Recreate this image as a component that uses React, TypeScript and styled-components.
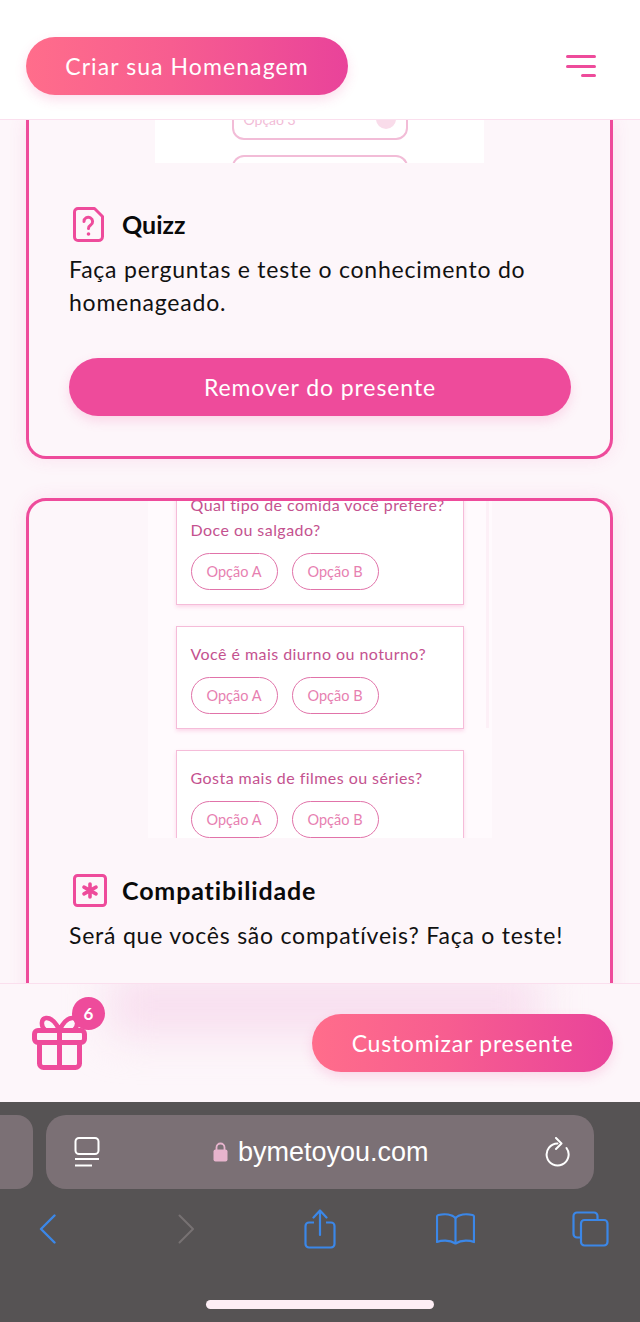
import styled, { createGlobalStyle } from "styled-components";

const PINK = "#ee4b9b";
const PAGE_BG = "#fdf6fa";
const BODY_FONT = `"Lato", "Noto Sans", sans-serif`;

const questions = [
  { id: 1, lines: ["Qual tipo de comida você prefere?", "Doce ou salgado?"] },
  { id: 2, lines: ["Você é mais diurno ou noturno?"] },
  { id: 3, lines: ["Gosta mais de filmes ou séries?"] },
];

function App() {
  return (
    <Page>
      <GlobalStyle />
      <Header>
        <GradientButton $width={322} $tracking={1.08}>
          Criar sua Homenagem
        </GradientButton>
        <MenuIcon>
          <MenuBar />
          <MenuBar />
          <MenuBar $short />
        </MenuIcon>
      </Header>

      <Content>
        <Card $cutTop>
          <QuizPreview>
            <OptionPill>
              Opção 3
              <OptionDot />
            </OptionPill>
            <OptionPillStub />
          </QuizPreview>
          <CardBody $top={43.5} $bottom={40}>
            <TitleRow>
              <IconSlot>
                <svg width="31" height="35" viewBox="0 0 31 35" fill="none">
                  <path
                    d="M5 1.500h16.500l8 8v20a4 4 0 0 1-4 4H5A3.500 3.500 0 0 1 1.500 30V5A3.500 3.500 0 0 1 5 1.500z"
                    stroke={PINK}
                    strokeWidth="3"
                    strokeLinejoin="round"
                  />
                  <path
                    d="M11 14.500a4.300 4.300 0 1 1 6.700 3.600c-1.500 1-2.200 1.700-2.200 3.400"
                    stroke={PINK}
                    strokeWidth="3"
                    strokeLinecap="round"
                  />
                  <circle cx="15.500" cy="27" r="1.800" fill={PINK} />
                </svg>
              </IconSlot>
              <CardTitle>Quizz</CardTitle>
            </TitleRow>
            <CardText>Faça perguntas e teste o conhecimento do homenageado.</CardText>
            <RemoveButton>Remover do presente</RemoveButton>
          </CardBody>
        </Card>

        <Card>
          <CompatPreview>
            <PreviewScroll />
            {questions.map((q) => (
              <QuestionCard key={q.id}>
                <QuestionText>
                  {q.lines.map((line) => (
                    <div key={line}>{line}</div>
                  ))}
                </QuestionText>
                <AnswerRow>
                  <AnswerPill>Opção A</AnswerPill>
                  <AnswerPill>Opção B</AnswerPill>
                </AnswerRow>
              </QuestionCard>
            ))}
          </CompatPreview>
          <CardBody $top={34.5} $bottom={120}>
            <TitleRow>
              <IconSlot>
                <svg width="34" height="33" viewBox="0 0 34 33" fill="none">
                  <rect x="1.500" y="1.500" width="31" height="30" rx="3" stroke={PINK} strokeWidth="3" />
                  <path
                    d="M17 10v13M11 13.200l12 6.600M23 13.200l-12 6.600"
                    stroke={PINK}
                    strokeWidth="3.600"
                    strokeLinecap="round"
                  />
                </svg>
              </IconSlot>
              <CardTitle $tracking={0.85}>Compatibilidade</CardTitle>
            </TitleRow>
            <CardText>Será que vocês são compatíveis? Faça o teste!</CardText>
          </CardBody>
        </Card>
      </Content>

      <Footer>
        <GiftWrap>
          <svg width="55" height="55" viewBox="0 0 55 55" fill="none">
            <rect x="2.500" y="15.500" width="50" height="12" rx="3.500" stroke={PINK} strokeWidth="5" />
            <path
              d="M7.500 27v21.500a4 4 0 0 0 4 4h32a4 4 0 0 0 4-4V27M27.500 16v36"
              stroke={PINK}
              strokeWidth="5"
            />
            <path
              d="M27.500 15C24 8 19 2.500 14 3C9 3.500 8.500 11 13 15M27.500 15C31 8 36 2.500 41 3C46 3.500 46.500 11 42 15"
              stroke={PINK}
              strokeWidth="4.500"
              strokeLinecap="round"
            />
          </svg>
          <GiftBadge>6</GiftBadge>
        </GiftWrap>
        <GradientButton $width={301} $tracking={0.76}>
          Customizar presente
        </GradientButton>
      </Footer>

      <Browser>
        <AddressRow>
          <TabStub />
          <AddressBar>
            <svg width="26" height="30" viewBox="0 0 26 30" fill="none" stroke="#fff">
              <rect x="1.500" y="1" width="23" height="16" rx="3.500" strokeWidth="2" />
              <path d="M1 22h24" strokeWidth="2" />
              <path d="M1 28.500h17" strokeWidth="2" />
            </svg>
            <UrlGroup>
              <svg width="15" height="20" viewBox="0 0 15 20" fill="none">
                <path d="M3.500 8V5.500a4 4 0 0 1 8 0V8" stroke="#e7b4cd" strokeWidth="1.800" />
                <rect x="0.500" y="7.500" width="14" height="12" rx="2" fill="#e7b4cd" />
              </svg>
              <UrlText>bymetoyou.com</UrlText>
            </UrlGroup>
            <svg width="25" height="30" viewBox="0 0 25 30" fill="none" stroke="#fff" strokeWidth="2">
              <path d="M12.500 6.500A11 11 0 1 0 21.500 11" strokeLinecap="round" />
              <path d="M11 1l5.500 5.500L11 12" strokeLinecap="round" strokeLinejoin="round" />
            </svg>
          </AddressBar>
        </AddressRow>

        <Toolbar>
          <svg width="17" height="30" viewBox="0 0 17 30" fill="none" stroke="#3b87e8" strokeWidth="2.400">
            <path d="M15.500 1.500L2 15l13.500 13.500" strokeLinecap="round" strokeLinejoin="round" />
          </svg>
          <svg width="17" height="30" viewBox="0 0 17 30" fill="none" stroke="#777273" strokeWidth="2">
            <path d="M1.500 1.500L15 15 1.500 28.500" strokeLinecap="round" strokeLinejoin="round" />
          </svg>
          <svg width="32" height="40" viewBox="0 0 32 40" fill="none" stroke="#3b87e8" strokeWidth="2.200">
            <path d="M10 13.500H5a3.500 3.500 0 0 0-3.500 3.500v18A3.500 3.500 0 0 0 5 38.500h22a3.500 3.500 0 0 0 3.500-3.500V17a3.500 3.500 0 0 0-3.500-3.500h-5" />
            <path d="M16 26V2M9.500 8.500L16 1.500l6.500 7" strokeLinecap="round" strokeLinejoin="round" />
          </svg>
          <svg width="39" height="32" viewBox="0 0 39 32" fill="none" stroke="#3b87e8" strokeWidth="2.200">
            <path d="M19.500 5C16 1.500 9 .5 2.500 2 1.500 2.300 1 3 1 4v25c4-1.500 12-2.500 18.500 1.500C26 26.500 34 27.500 38 29V4c0-1-.5-1.700-1.500-2C30 .5 23 1.500 19.500 5z" strokeLinejoin="round" />
            <path d="M19.500 5v25" />
          </svg>
          <svg width="37" height="36" viewBox="0 0 37 36" fill="none" stroke="#3b87e8" strokeWidth="2.200">
            <path d="M8 26.500H5a3.500 3.500 0 0 1-3.500-3.500V5A3.500 3.500 0 0 1 5 1.500h17A3.500 3.500 0 0 1 25.500 5v3" />
            <rect x="9" y="9" width="26.500" height="25.500" rx="3.500" />
          </svg>
        </Toolbar>

        <HomeIndicator />
      </Browser>
    </Page>
  );
}

const GlobalStyle = createGlobalStyle`
  html, body {
    margin: 0;
    padding: 0;
    background: ${PAGE_BG};
  }
  * {
    box-sizing: border-box;
  }
`;

const Page = styled.div`
  width: 640px;
  height: 1322px;
  display: flex;
  flex-direction: column;
  overflow: hidden;
  font-family: ${BODY_FONT};
  background: ${PAGE_BG};
`;

const Header = styled.header`
  height: 120px;
  flex-shrink: 0;
  padding: 37px 44px 24px 26px;
  display: flex;
  align-items: center;
  justify-content: space-between;
  background: #fff;
  border-bottom: 1px solid #fbdfee;
`;

const GradientButton = styled.button<{ $width: number; $tracking: number }>`
  position: relative;
  width: ${(p) => p.$width}px;
  height: 58px;
  flex-shrink: 0;
  border: 0;
  border-radius: 29px;
  background: linear-gradient(90deg, #ff6d8b 0%, #f75d90 45%, #e9439a 100%);
  box-shadow: 0 5px 12px rgba(238, 75, 155, 0.18);
  color: #fff;
  font-family: ${BODY_FONT};
  font-size: 23px;
  letter-spacing: ${(p) => p.$tracking}px;
`;

const MenuIcon = styled.div`
  width: 30px;
  display: flex;
  flex-direction: column;
  align-items: flex-end;
  gap: 6.5px;
`;

const MenuBar = styled.span<{ $short?: boolean }>`
  display: block;
  width: ${(p) => (p.$short ? "15px" : "30px")};
  height: 3px;
  border-radius: 2px;
  background: ${PINK};
`;

const Content = styled.main`
  height: 863px;
  flex-shrink: 0;
  overflow: hidden;
  padding: 0 26px;
  display: flex;
  flex-direction: column;
  gap: 39px;
`;

const Card = styled.section<{ $cutTop?: boolean }>`
  flex-shrink: 0;
  width: 587px;
  border: 3px solid ${PINK};
  border-top-width: ${(p) => (p.$cutTop ? 0 : 3)}px;
  border-radius: ${(p) => (p.$cutTop ? "0 0 20px 20px" : "20px")};
  background: ${PAGE_BG};
  box-shadow: 0 0 18px rgba(238, 75, 155, 0.12);
`;

const QuizPreview = styled.div`
  width: 329px;
  height: 43px;
  margin: 0 auto;
  overflow: hidden;
  background: #fff;
  display: flex;
  flex-direction: column;
  align-items: center;
  gap: 15px;
`;

const OptionPill = styled.div`
  width: 176px;
  height: 36px;
  flex-shrink: 0;
  margin-top: -16px;
  padding: 0 10px 6px;
  display: flex;
  align-items: center;
  justify-content: space-between;
  border: 2px solid #f2bcd7;
  border-radius: 12px;
  color: #f2bcd7;
  font-size: 14px;
`;

const OptionDot = styled.span`
  width: 20px;
  height: 20px;
  border-radius: 50%;
  background: #f9dcea;
`;

const OptionPillStub = styled.div`
  width: 176px;
  height: 12px;
  flex-shrink: 0;
  border: 2px solid #f2bcd7;
  border-radius: 12px 12px 0 0;
`;

const CompatPreview = styled.div`
  position: relative;
  width: 344px;
  height: 337px;
  margin: 0 auto;
  overflow: hidden;
  background: #fffafd;
  display: flex;
  flex-direction: column;
  align-items: center;
  gap: 21px;
`;

const PreviewScroll = styled.span`
  position: absolute;
  top: 0;
  right: 3px;
  width: 3px;
  height: 227px;
  background: #fdf0f7;
`;

const QuestionCard = styled.div`
  width: 288px;
  flex-shrink: 0;
  padding: 14px 14px 14px;
  background: #fff;
  border: 1px solid #f5bcd9;
  box-shadow: 0 2px 4px rgba(238, 75, 155, 0.2);

  &:first-of-type {
    margin-top: -24px;
  }
`;

const QuestionText = styled.div`
  font-size: 16px;
  line-height: 25px;
  letter-spacing: 0.45px;
  color: #c4528f;
`;

const AnswerRow = styled.div`
  margin-top: 11px;
  display: flex;
  gap: 14px;
`;

const AnswerPill = styled.div`
  width: 87px;
  height: 37px;
  display: flex;
  align-items: center;
  justify-content: center;
  border: 1px solid #e173a9;
  border-radius: 19px;
  font-size: 14.5px;
  color: #e77fb1;
`;

const CardBody = styled.div<{ $top: number; $bottom: number }>`
  padding: ${(p) => p.$top}px 39px ${(p) => p.$bottom}px 40px;
`;

const TitleRow = styled.div`
  display: flex;
  align-items: center;
  height: 35px;
`;

const IconSlot = styled.div`
  width: 53px;
  flex-shrink: 0;
  padding-left: 3.5px;
  display: flex;
`;

const CardTitle = styled.h3<{ $tracking?: number }>`
  margin: 0;
  font-size: 25px;
  font-weight: 700;
  letter-spacing: ${(p) => p.$tracking ?? 0}px;
  color: #0a0a0a;
`;

const CardText = styled.p`
  margin: 11px 0 0;
  font-size: 23px;
  line-height: 33px;
  letter-spacing: 0.77px;
  color: #111;
`;

const RemoveButton = styled.button`
  display: block;
  width: 502px;
  height: 58px;
  margin-top: 39.5px;
  border: 0;
  border-radius: 29px;
  background: ${PINK};
  box-shadow: 0 5px 12px rgba(238, 75, 155, 0.18);
  color: #fff;
  font-family: ${BODY_FONT};
  font-size: 23px;
  letter-spacing: 0.92px;
`;

const Footer = styled.footer`
  position: relative;
  height: 119px;
  flex-shrink: 0;
  padding: 30px 27px 0 32px;
  display: flex;
  align-items: flex-start;
  justify-content: space-between;
  overflow: hidden;
  background: ${PAGE_BG};
  border-top: 1px solid #fbdfee;

  &::before {
    content: "";
    position: absolute;
    left: 110px;
    top: -10px;
    width: 430px;
    height: 62px;
    background: #f8dfef;
    filter: blur(20px);
  }
`;

const GiftWrap = styled.div`
  position: relative;
  width: 55px;
  height: 55px;
  margin-top: 1px;
`;

const GiftBadge = styled.span`
  position: absolute;
  left: 40px;
  top: -18px;
  width: 33px;
  height: 33px;
  display: flex;
  align-items: center;
  justify-content: center;
  border-radius: 50%;
  background: ${PINK};
  color: #fff;
  font-size: 17px;
  font-weight: 700;
`;

const Browser = styled.div`
  flex: 1;
  background: #565354;
  display: flex;
  flex-direction: column;
`;

const AddressRow = styled.div`
  margin-top: 13px;
  display: flex;
  gap: 13px;
`;

const TabStub = styled.div`
  width: 33px;
  height: 74px;
  border-radius: 0 16px 16px 0;
  background: #7b7075;
`;

const AddressBar = styled.div`
  width: 548px;
  height: 74px;
  padding: 0 24px 0 28px;
  display: flex;
  align-items: center;
  border-radius: 20px;
  background: #7b7075;
`;

const UrlGroup = styled.div`
  margin-left: 113px;
  margin-right: auto;
  display: flex;
  align-items: center;
  gap: 10px;
`;

const UrlText = styled.span`
  font-family: "Liberation Sans", Arial, sans-serif;
  font-size: 27px;
  color: #fff;
`;

const Toolbar = styled.div`
  margin-top: 20px;
  height: 40px;
  padding-left: 39px;
  display: grid;
  grid-template-columns: 139px 126px 132px 136px 37px;
  align-items: center;
`;

const HomeIndicator = styled.div`
  width: 228px;
  height: 9px;
  margin: 51px auto 0;
  border-radius: 5px;
  background: #fdeef5;
`;

export default App;
